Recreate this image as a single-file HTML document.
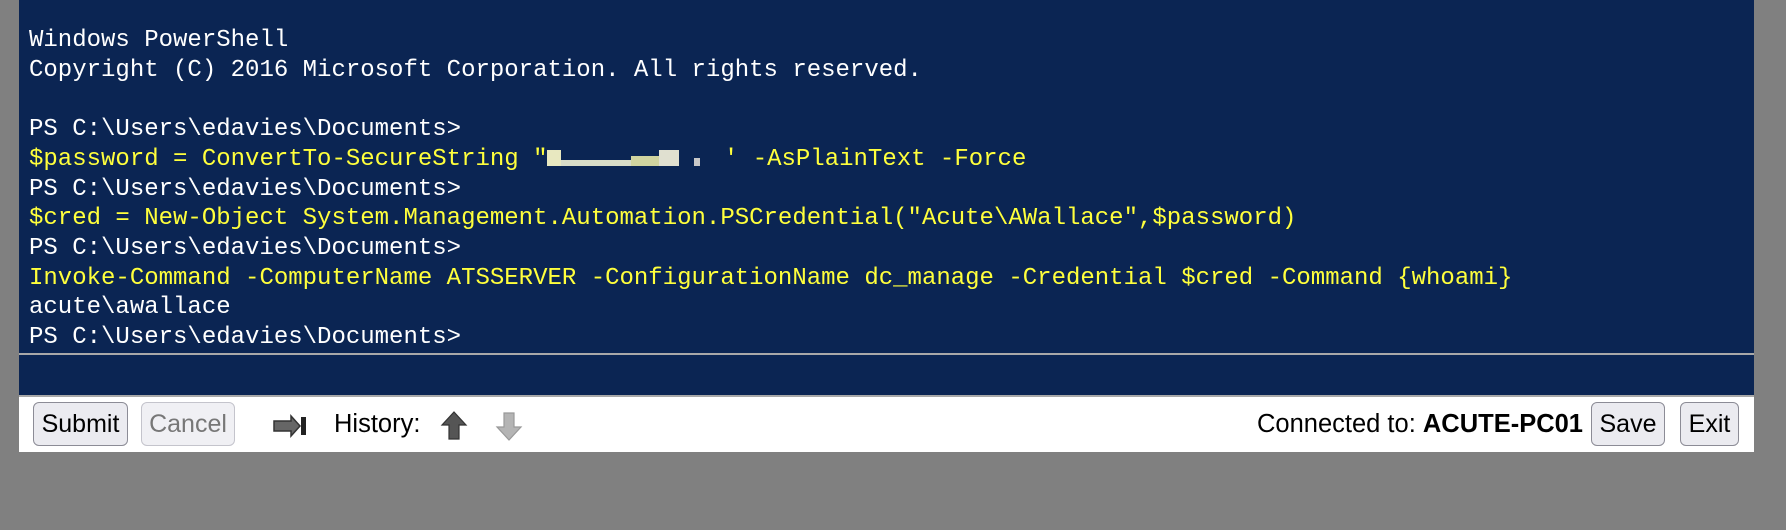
<!DOCTYPE html>
<html><head><meta charset="utf-8"><style>
html,body{margin:0;padding:0;width:1786px;height:530px;background:#808080;overflow:hidden}
#panel{position:absolute;left:19px;top:0;width:1735px;height:452px;background:#fff}
#out{position:absolute;left:0;top:0;width:1735px;height:353px;background:#0b2553;border-bottom:2px solid #a8a8a8}
#in{position:absolute;left:0;top:355px;width:1735px;height:40px;background:#0b2553;border-bottom:2px solid #a8a8a8}
pre{margin:0;position:absolute;left:10px;top:26px;font-family:"Liberation Mono",monospace;font-size:24px;line-height:29.7px;color:#fff}
.y{color:#ffff3c}
.b{display:inline-block;height:16px;vertical-align:-1px}
.btn{position:absolute;top:402px;height:42px;border:1.5px solid #8c8c96;border-radius:6px;background:#ebebf0;font-family:"Liberation Sans",sans-serif;font-size:25px;line-height:42px;text-align:center;color:#000;box-sizing:content-box}
.t{position:absolute;top:402px;line-height:44px;font-family:"Liberation Sans",sans-serif;font-size:25.5px;color:#000}
</style></head><body>
<div id="panel">
<div id="out"><pre>Windows PowerShell
Copyright (C) 2016 Microsoft Corporation. All rights reserved.

PS C:\Users\edavies\Documents>
<span class="y">$password = ConvertTo-SecureString "<span class="b" style="width:14px;background:#e8e8c0"></span><span class="b" style="width:70px;height:6px;background:#d8dcc8;vertical-align:-1px"></span><span class="b" style="width:28px;background:#d0d4a0;height:10px"></span><span class="b" style="width:20px;background:#e0e0d0"></span> <span class="b" style="width:6px;height:8px;background:#c8c8c8"></span><span class="b" style="width:24px"></span>' -AsPlainText -Force</span>
PS C:\Users\edavies\Documents>
<span class="y">$cred = New-Object System.Management.Automation.PSCredential("Acute\AWallace",$password)</span>
PS C:\Users\edavies\Documents>
<span class="y">Invoke-Command -ComputerName ATSSERVER -ConfigurationName dc_manage -Credential $cred -Command {whoami}</span>
acute\awallace
PS C:\Users\edavies\Documents></pre></div>
<div id="in"></div>
</div>
<div class="btn" style="left:33px;width:93px">Submit</div>
<div class="btn" style="left:141px;width:92px;color:#777;border-color:#c4c4cc;background:#f0f0f4">Cancel</div>
<svg style="position:absolute;left:273px;top:414px" width="35" height="24" viewBox="0 0 35 24"><path d="M1 7h17V2l9 10-9 10v-5H1z" fill="#666" stroke="#333" stroke-width="1.5"/><rect x="28" y="3" width="5" height="18" fill="#222"/></svg>
<div class="t" style="left:334px">History:</div>
<svg style="position:absolute;left:440px;top:411px" width="28" height="30" viewBox="0 0 28 30"><path d="M14 1L26 14H19V28H9V14H2z" fill="#555" stroke="#333" stroke-width="1.2"/></svg>
<svg style="position:absolute;left:495px;top:411px" width="28" height="30" viewBox="0 0 28 30"><path d="M9 2H19V16H26L14 29L2 16H9z" fill="#b4b4b4" stroke="#999" stroke-width="1.2"/></svg>
<div class="t" style="left:1257px">Connected to: <b>ACUTE-PC01</b></div>
<div class="btn" style="left:1591px;width:72px">Save</div>
<div class="btn" style="left:1680px;width:57px">Exit</div>
</body></html>
